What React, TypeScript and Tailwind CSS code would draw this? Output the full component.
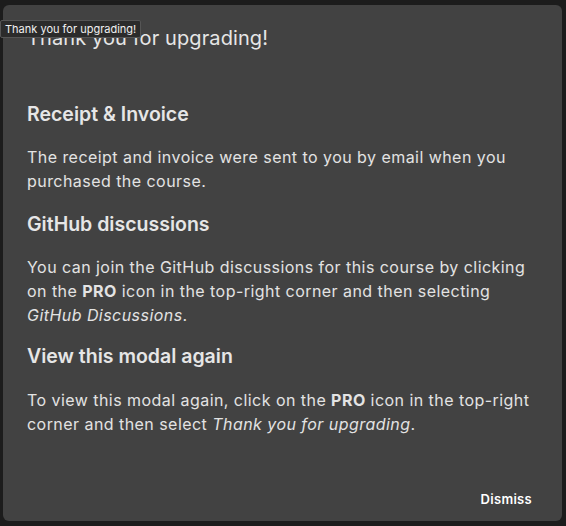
export default function App() {
  return (
    <div
      className="relative w-[566px] h-[526px] overflow-hidden bg-[#1c1c1c] text-[#e6e6e6]"
      style={{ fontFamily: 'Inter, "Noto Sans", sans-serif' }}
    >
      {/* modal */}
      <div className="absolute left-[3px] top-[5px] w-[559px] h-[516px] rounded-[6px] bg-[#424242] px-[24px] pt-[17px] pb-[14px] flex flex-col">
        <h1 className="text-[20px] leading-[32px] font-normal tracking-[0.1px]">Thank you for upgrading!</h1>

        <h2 className="mt-[46px] text-[19.5px] leading-[28px] font-semibold">Receipt &amp; Invoice</h2>
        <p className="mt-[17px] text-[16px] leading-[24px] tracking-[0.45px] text-[#e3e3e3]">
          The receipt and invoice were sent to you by email when you purchased the course.
        </p>

        <h2 className="mt-[17px] text-[19.5px] leading-[28px] font-semibold">GitHub discussions</h2>
        <p className="mt-[17px] text-[16px] leading-[24px] tracking-[0.45px] text-[#e3e3e3]">
          You can join the GitHub discussions for this course by clicking on the <b className="font-bold">PRO</b> icon in
          the top-right corner and then selecting <i>GitHub Discussions</i>.
        </p>

        <h2 className="mt-[15px] text-[19.5px] leading-[28px] font-semibold">View this modal again</h2>
        <p className="mt-[18px] text-[16px] leading-[24px] tracking-[0.45px] text-[#e3e3e3]">
          To view this modal again, click on the <b className="font-bold">PRO</b> icon in the top-right corner and then
          select <i>Thank you for upgrading</i>.
        </p>

        <div className="mt-auto flex justify-end pr-[6px]">
          <button className="text-[13px] leading-[16px] font-semibold tracking-[0.3px] text-white">Dismiss</button>
        </div>
      </div>

      {/* tooltip */}
      <div className="absolute left-0 top-[20px] h-[18px] px-[4px] flex items-center rounded-[2px] border border-[#555] bg-[#2b2b2b] text-[11px] text-[#f0f0f0]">
        Thank you for upgrading!
      </div>
    </div>
  );
}
